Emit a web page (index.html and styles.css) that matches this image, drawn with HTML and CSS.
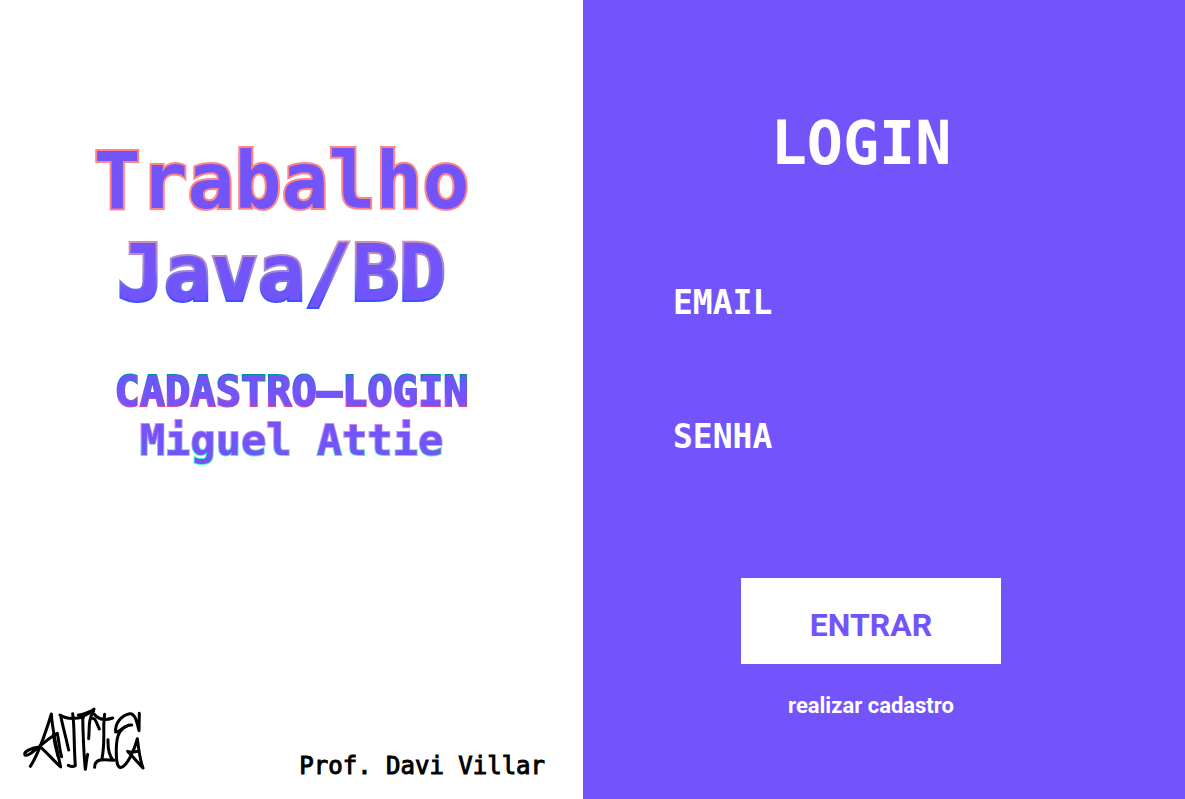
FILE: index.html
```html
<!DOCTYPE html>
<html lang="pt-BR">
<head>
  <meta charset="utf-8">
  <meta name="viewport" content="width=device-width, initial-scale=1">
  <title>Login</title>
  <link rel="stylesheet" href="styles.css">
</head>
<body>
  <div class="page">
    <section class="intro">
      <h1 class="title">
        <span class="outlined title-top">Trabalho</span>
        <span class="outlined title-bottom">Java/BD</span>
      </h1>
      <p class="subtitle">
        <span class="outlined subtitle-topic">CADASTRO–LOGIN</span>
        <span class="outlined subtitle-author">Miguel Attie</span>
      </p>
      <footer class="credits">
        <svg class="signature" viewBox="0 0 420 240" role="img" aria-label="Assinatura">
          <g transform="translate(15 12)">
            <path d="M31 187C51 157 75 92 94 30C97 78 111 139 122 189C104 173 78 143 60 128"/>
            <path d="M125 158C118 137 117 111 112 88C96 95 78 112 60 126C43 140 22 159 15 153C10 144 28 133 60 128"/>
            <path d="M100 92C103 113 108 135 114 157"/>
            <path d="M120 33C137 46 168 44 190 40M123 40C128 65 138 101 146 138M158 29C164 67 161 118 166 185C160 188 151 187 145 184"/>
          </g>
          <g transform="translate(195 12)">
            <path d="M0 39C18 34 31 27 42 15M-5 33C8 33 22 26 40 18M8 34C9 88 11 147 16 196C19 181 19 165 23 151"/>
            <path d="M41 21C24 46 29 72 26 104M31 44C47 38 48 55 58 75"/>
            <path d="M42 30C57 49 78 49 98 42M74 31C67 75 77 105 66 164M44 190C43 164 71 165 102 169M84 107C83 139 89 157 99 168"/>
            <path d="M178 28L177 80C170 50 164 27 149 29C124 34 104 58 107 84C117 89 132 61 155 63"/>
            <path d="M145 64C111 75 108 110 109 151C109 171 112 193 124 190C143 184 164 136 172 104C176 134 179 166 189 192C170 172 158 157 143 142C153 146 164 144 177 141"/>
          </g>
        </svg>
        <p class="professor">Prof. Davi Villar</p>
      </footer>
    </section>
    <main class="login">
      <form class="login-form">
        <h2 class="login-title">LOGIN</h2>
        <div class="field">
          <label class="field-label" for="email">EMAIL</label>
          <input class="field-input" id="email" name="email" type="email">
        </div>
        <div class="field">
          <label class="field-label" for="senha">SENHA</label>
          <input class="field-input" id="senha" name="senha" type="password">
        </div>
        <div class="actions">
          <button class="submit" type="submit">ENTRAR</button>
          <a class="register" href="#cadastro">realizar cadastro</a>
        </div>
      </form>
    </main>
  </div>
</body>
</html>
```
FILE: styles.css
```css
:root {
  --purple: #7354fa;
  --mono: "DejaVu Sans Mono", monospace;
  --sans: Roboto, "Liberation Sans", sans-serif;
}

* {
  box-sizing: border-box;
}

body,
h1,
h2,
p {
  margin: 0;
}

.page {
  display: grid;
  grid-template-columns: 583fr 602fr;
  min-height: 100vh;
  font-family: var(--mono);
}

.intro {
  display: flex;
  flex-direction: column;
  padding: 135px 0 19px;
  background: #fff;
}

.title {
  padding-right: 20px;
  font-size: 78px;
  line-height: 92px;
  text-align: center;
}

.subtitle {
  margin-top: 48px;
  font-size: 42px;
  line-height: 49px;
  text-align: center;
}

.outlined {
  display: block;
  background-clip: text;
  -webkit-background-clip: text;
  -webkit-text-fill-color: var(--purple);
  -webkit-text-stroke: 4px transparent;
  paint-order: stroke fill;
}

.title-top {
  background-image: linear-gradient(#ff8585, #ff8585);
}

.title-bottom {
  background-image: linear-gradient(#d28eae 15%, #a58bd0 45%, #3d50ff 80%);
}

.subtitle-topic {
  background-image: linear-gradient(#008da0 20%, #7354fa 50%, #d84d9c 80%);
  -webkit-text-stroke-width: 2px;
  font-weight: bold;
}

.subtitle-author {
  background-image: linear-gradient(#e080d8 20%, #c49af0 45%, #3dffa8 80%);
  -webkit-text-stroke-width: 2px;
  font-weight: bold;
}

.credits {
  display: flex;
  align-items: flex-end;
  justify-content: space-between;
  margin-top: auto;
  padding: 0 38px 0 15px;
}

.signature {
  width: 140px;
  height: 80px;
  fill: none;
  stroke: #000;
  stroke-width: 9;
  stroke-linecap: round;
  stroke-linejoin: round;
}

.professor {
  color: #000;
  font-size: 24px;
  line-height: 28px;
  -webkit-text-stroke: 1px #000;
}

.login {
  padding: 108px 0 48px;
  background: var(--purple);
  color: #fff;
}

.login-title {
  padding-right: 46px;
  margin-bottom: 106px;
  font-size: 60px;
  line-height: 70px;
  text-align: center;
}

.field {
  display: flex;
  flex-direction: column;
  gap: 8px;
  margin-bottom: 32px;
  padding: 0 90px;
}

.field-label {
  font-size: 33px;
  font-weight: bold;
  line-height: 38px;
}

.field-input {
  height: 56px;
  padding: 0 8px;
  border: 0;
  background: transparent;
  color: #fff;
  font: 24px var(--mono);
  outline: none;
}

.actions {
  display: flex;
  flex-direction: column;
  align-items: center;
  gap: 28px;
  margin-top: 58px;
  padding-right: 26px;
  font-family: var(--sans);
}

.submit {
  width: 260px;
  height: 86px;
  padding: 8px 0 0;
  border: 0;
  background: #fff;
  color: var(--purple);
  font: bold 32px var(--sans);
  cursor: pointer;
}

.register {
  color: #fff;
  font-size: 22px;
  font-weight: bold;
  line-height: 28px;
  text-decoration: none;
}
```
